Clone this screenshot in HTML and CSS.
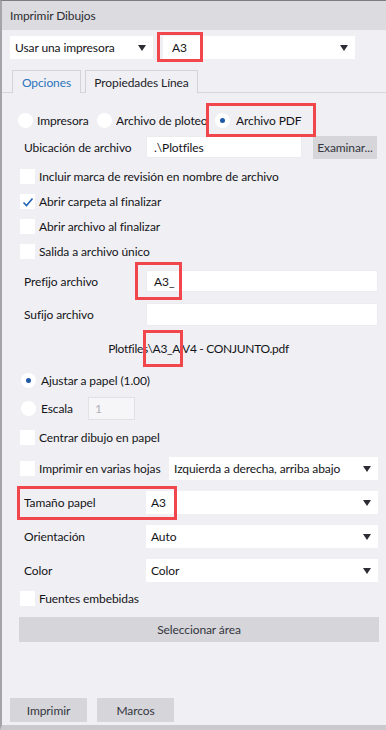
FILE: index.html
```html
<!DOCTYPE html>
<html>
<head>
<meta charset="utf-8">
<link rel="stylesheet" href="styles.css">
</head>
<body>
<div class="window">
  <div class="titlebar">Imprimir Dibujos</div>
  <div class="toprow">
    <div class="select s-printer"><span>Usar una impresora</span><i class="arrow"></i></div>
    <div class="select s-paper"><span>A3</span><i class="arrow"></i></div>
  </div>
  <div class="tabs">
    <div class="tab active">Opciones</div>
    <div class="tab">Propiedades Línea</div>
  </div>
  <div class="panel">
    <div class="radios">
      <div class="ritem r1"><span class="radio"></span><span class="rlabel">Impresora</span></div>
      <div class="ritem r2"><span class="radio"></span><span class="rlabel clip">Archivo de ploteo</span></div>
      <div class="ritem r3"><span class="radio on"></span><span class="rlabel">Archivo PDF</span></div>
    </div>
    <div class="row h22 mt6">
      <span class="label">Ubicación de archivo</span>
      <div class="input w-loc">.\Plotfiles</div>
      <div class="btn examinar">Examinar...</div>
    </div>
    <div class="cbrow mt6"><span class="cb"></span><span>Incluir marca de revisión en nombre de archivo</span></div>
    <div class="cbrow"><span class="cb"><svg width="12" height="10" viewBox="0 0 12 10"><path d="M1.5 5.5 L4.5 8.5 L10.5 1.5" fill="none" stroke="#1e64b4" stroke-width="1.6"/></svg></span><span>Abrir carpeta al finalizar</span></div>
    <div class="cbrow"><span class="cb"></span><span>Abrir archivo al finalizar</span></div>
    <div class="cbrow"><span class="cb"></span><span>Salida a archivo único</span></div>
    <div class="row h22 mt6">
      <span class="label">Prefijo archivo</span>
      <div class="input grow">A3_</div>
    </div>
    <div class="row h23 mt11">
      <span class="label">Sufijo archivo</span>
      <div class="input grow"></div>
    </div>
    <div class="pathtext">Plotfiles\A3_A V4 - CONJUNTO.pdf</div>
    <div class="rrow h18 mt13"><span class="radio on"></span><span>Ajustar a papel (1.00)</span></div>
    <div class="rrow h23 mt8"><span class="radio"></span><span class="escala">Escala</span><div class="small-input">1</div></div>
    <div class="cbrow mt5 h24"><span class="cb"></span><span>Centrar dibujo en papel</span></div>
    <div class="row h23 mt7">
      <span class="cb"></span><span class="cbtext">Imprimir en varias hojas</span>
      <div class="select grow"><span>Izquierda a derecha, arriba abajo</span><i class="arrow"></i></div>
    </div>
    <div class="row h23 mt11">
      <span class="label">Tamaño papel</span>
      <div class="select grow"><span>A3</span><i class="arrow"></i></div>
    </div>
    <div class="row h23 mt11">
      <span class="label">Orientación</span>
      <div class="select grow"><span>Auto</span><i class="arrow"></i></div>
    </div>
    <div class="row h23 mt11">
      <span class="label">Color</span>
      <div class="select grow"><span>Color</span><i class="arrow"></i></div>
    </div>
    <div class="cbrow mt4 h24"><span class="cb"></span><span>Fuentes embebidas</span></div>
    <div class="btn wide">Seleccionar área</div>
  </div>
  <div class="footer">
    <div class="btn fbtn">Imprimir</div>
    <div class="btn fbtn">Marcos</div>
  </div>
  <div class="mark m1"></div>
  <div class="mark m2"></div>
  <div class="mark m3"></div>
  <div class="mark m4"></div>
  <div class="mark m5"></div>
</div>
</body>
</html>
```
FILE: styles.css
```css
* { box-sizing: border-box; }
html, body { margin: 0; padding: 0; }
body {
  font-family: "Lato", "Noto Sans", sans-serif;
  font-size: 12px;
  letter-spacing: -0.1px;
  color: #141418;
  background: #f0f0f4;
}
.window {
  position: relative;
  width: 386px;
  height: 730px;
  background: #f0f0f4;
  border-top: 1px solid #7c7c82;
  border-left: 2px solid #a4a4aa;
  border-bottom: 5px solid #c9c9ce;
  display: flex;
  flex-direction: column;
  white-space: nowrap;
}
.titlebar {
  height: 29px;
  background: #dcdce0;
  padding-left: 8px;
  display: flex;
  align-items: center;
  color: #2c2c32;
}
.toprow {
  display: flex;
  gap: 10px;
  margin: 6px 0 0 8px;
  height: 23px;
}
.select {
  background: #fff;
  display: flex;
  align-items: center;
  padding-left: 5px;
  padding-right: 7px;
  height: 23px;
}
.select span { flex: 1; overflow: hidden; }
.arrow {
  width: 0; height: 0;
  border-left: 4.5px solid transparent;
  border-right: 4.5px solid transparent;
  border-top: 6px solid #2c2c34;
  display: block;
}
.s-printer { width: 143px; }
.s-paper { width: 192px; padding-left: 9px; }
.tabs {
  display: flex;
  gap: 4px;
  margin-top: 11px;
  padding-left: 10px;
  height: 23px;
  border-bottom: 1px solid #d6d6da;
}
.tab {
  height: 23px;
  border: 1px solid #d3d3d8;
  border-bottom: none;
  display: flex;
  align-items: center;
  justify-content: center;
  color: #222228;
  background: #f0f0f4;
  width: 113px;
}
.tab.active { color: #2c74ba; width: 69px; }
.panel {
  margin: 0 8px;
  padding-left: 9px;
  display: flex;
  flex-direction: column;
}
.radios {
  display: flex;
  margin-top: 17px;
  height: 20px;
  align-items: center;
}
.ritem { display: flex; align-items: center; gap: 4px; }
.r1 { width: 79px; margin-left: -1px; }
.r2 { width: 118px; }
.r2 .clip { width: 91px; overflow: hidden; }
.r3 { gap: 6px; }
.radio {
  width: 15px; height: 15px;
  border-radius: 50%;
  background: #fff;
  display: inline-flex;
  align-items: center;
  justify-content: center;
  flex: none;
}
.radio.on::after {
  content: "";
  width: 5px; height: 5px;
  border-radius: 50%;
  background: #1e5aa8;
}
.row { display: flex; align-items: center; }
.h22 { height: 22px; }
.h23 { height: 23px; }
.h24 { height: 24px; }
.h18 { height: 18px; }
.mt4 { margin-top: 4px; }
.mt5 { margin-top: 5px; }
.mt6 { margin-top: 6px; }
.mt7 { margin-top: 7px; }
.mt8 { margin-top: 8px; }
.mt11 { margin-top: 11px; }
.mt13 { margin-top: 13px; }
.label { width: 127px; padding-left: 5px; flex: none; }
.input {
  background: #fff;
  height: 100%;
  display: flex;
  align-items: center;
  padding-left: 7px;
  border: 1px solid #ececf0;
}
.grow { flex: 1; }
.w-loc { width: 156px; flex: none; }
.btn {
  background: #d5d5da;
  color: #36363e;
  display: flex;
  align-items: center;
  justify-content: center;
}
.examinar { width: 64px; height: 23px; margin-left: 11px; }
.cbrow { display: flex; align-items: center; height: 25px; gap: 4px; }
.cb {
  width: 15px; height: 15px;
  background: #fff;
  flex: none;
  margin-left: 1px;
  display: inline-flex;
  align-items: center;
  justify-content: center;
}
.cbtext { margin-left: 4px; width: 130px; flex: none; }
.pathtext {
  margin-top: 12px;
  height: 20px;
  display: flex;
  align-items: center;
  justify-content: center;
  letter-spacing: -0.3px;
}
.rrow { display: flex; align-items: center; gap: 5px; padding-left: 2px; }
.escala { width: 42px; }
.small-input {
  width: 47px; height: 23px;
  background: #f6f6f9;
  border: 1px solid #e2e2e6;
  color: #b0b0b6;
  display: flex;
  align-items: center;
  padding-left: 6px;
}
.wide { height: 25px; margin-top: 6px; margin-right: -1px; }
.footer {
  margin-top: auto;
  display: flex;
  gap: 10px;
  padding: 0 0 3px 8px;
}
.fbtn { width: 77px; height: 24px; }
.mark {
  position: absolute;
  border: 3px solid #f1464c;
}
.m1 { left: 155px; top: 31px; width: 46px; height: 30px; }
.m2 { left: 204px; top: 102px; width: 110px; height: 34px; }
.m3 { left: 133px; top: 261px; width: 47px; height: 38px; }
.m4 { left: 141px; top: 329px; width: 40px; height: 37px; }
.m5 { left: 15px; top: 485px; width: 160px; height: 34px; }
```
